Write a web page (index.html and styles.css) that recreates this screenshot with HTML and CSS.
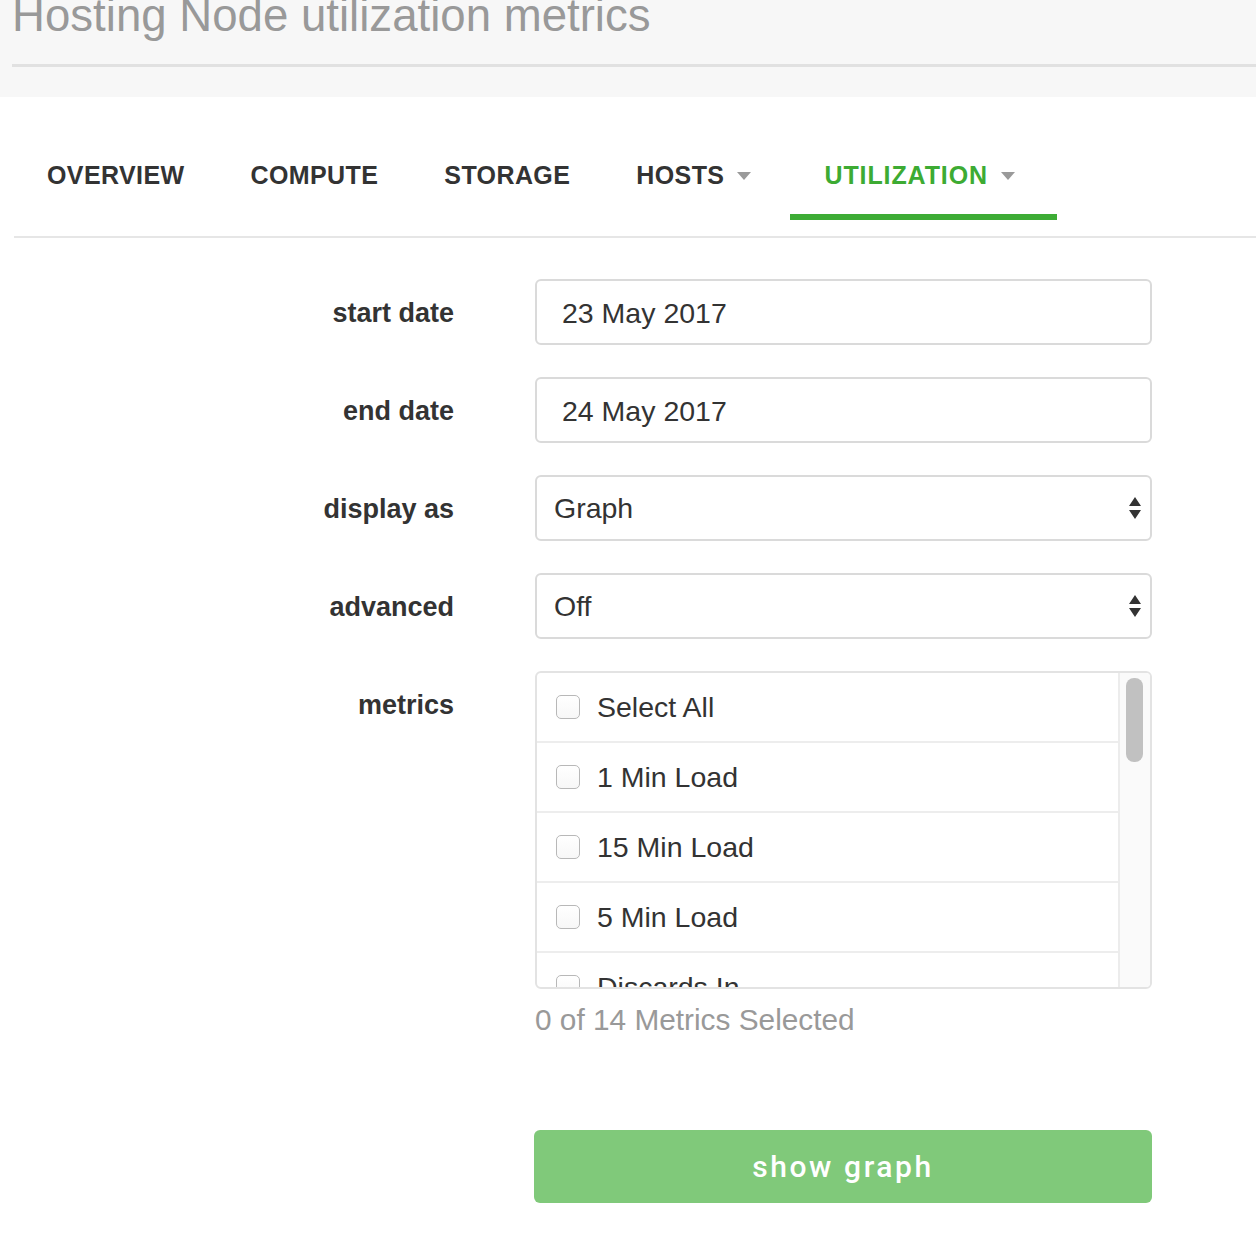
FILE: index.html
```html
<!DOCTYPE html>
<html>
<head>
<meta charset="utf-8">
<link rel="stylesheet" href="styles.css">
</head>
<body>
<header class="page-header">
  <h1 class="title">Hosting Node utilization metrics</h1>
  <div class="title-rule"></div>
</header>
<nav>
  <ul class="tabs">
    <li class="tab">OVERVIEW</li>
    <li class="tab">COMPUTE</li>
    <li class="tab">STORAGE</li>
    <li class="tab tab-drop">HOSTS<span class="caret"></span></li>
    <li class="tab tab-drop active">UTILIZATION<span class="caret"></span></li>
  </ul>
</nav>
<form class="form">
  <label class="label">start date</label>
  <div class="field"><input class="input" type="text" value="23 May 2017"></div>

  <label class="label">end date</label>
  <div class="field"><input class="input" type="text" value="24 May 2017"></div>

  <label class="label">display as</label>
  <div class="field"><div class="select"><span>Graph</span>
    <svg class="arrows" width="12" height="24" viewBox="0 0 12 24"><path d="M6 1 L12 10 L0 10 Z M0 14 L12 14 L6 23 Z" fill="#333"/></svg></div></div>

  <label class="label">advanced</label>
  <div class="field"><div class="select"><span>Off</span>
    <svg class="arrows" width="12" height="24" viewBox="0 0 12 24"><path d="M6 1 L12 10 L0 10 Z M0 14 L12 14 L6 23 Z" fill="#333"/></svg></div></div>

  <label class="label label-top">metrics</label>
  <div class="field">
    <div class="metrics">
      <div class="metric-list">
        <div class="metric"><span class="box"></span>Select All</div>
        <div class="metric"><span class="box"></span>1 Min Load</div>
        <div class="metric"><span class="box"></span>15 Min Load</div>
        <div class="metric"><span class="box"></span>5 Min Load</div>
        <div class="metric"><span class="box"></span>Discards In</div>
      </div>
      <div class="scrollbar"><div class="thumb"></div></div>
    </div>
    <div class="hint">0 of 14 Metrics Selected</div>
    <button class="btn" type="button">show graph</button>
  </div>
</form>
</body>
</html>
```

FILE: styles.css
```css
* { box-sizing: border-box; }
html, body { margin: 0; padding: 0; background: #fff; }
body {
  font-family: "Liberation Sans", Arial, sans-serif;
  color: #333;
  overflow: hidden;
}
.page-header {
  background: #f7f7f7;
  height: 97px;
  padding: 0;
  overflow: hidden;
}
.title {
  margin: -7px 0 0 12px;
  font-size: 45.6px;
  line-height: 46px;
  font-weight: normal;
  color: #999;
  white-space: nowrap;
}
.title-rule {
  margin: 25px 0 0 12px;
  height: 3px;
  background: #e1e1e1;
}
.tabs {
  list-style: none;
  margin: 39px 0 0 14px;
  padding: 0 0 16px 0;
  display: flex;
  border-bottom: 2px solid #e6e6e6;
}
.tab {
  height: 84px;
  padding: 0 33px;
  display: flex;
  align-items: center;
  font-size: 25px;
  line-height: 1;
  font-weight: bold;
  letter-spacing: 0.4px;
  color: #333;
  border-bottom: 6px solid transparent;
}
.tab-drop { padding-right: 39px; }
.tab.active {
  padding-left: 34px;
  padding-right: 42px;
  letter-spacing: 0.9px;
  color: #3dab33;
  border-bottom-color: #3dac35;
}
.caret {
  display: inline-block;
  width: 0;
  height: 0;
  margin-left: 13px;
  margin-top: 2px;
  border-left: 7.5px solid transparent;
  border-right: 7.5px solid transparent;
  border-top: 8px solid #9a9a9a;
}
.form {
  display: grid;
  grid-template-columns: 441px 617px;
  column-gap: 81px;
  row-gap: 32px;
  margin: 41px 0 0 13px;
}
.label {
  height: 66px;
  display: flex;
  align-items: center;
  justify-content: flex-end;
  padding-top: 2px;
  font-size: 27px;
  font-weight: bold;
  color: #333;
}
.label-top { align-self: start; }
.input {
  display: block;
  width: 100%;
  height: 66px;
  border: 2px solid #dadada;
  border-radius: 6px;
  padding: 3px 0 0 25px;
  font-family: "Liberation Sans", Arial, sans-serif;
  font-size: 28.5px;
  color: #333;
  background: #fff;
  outline: none;
}
.select {
  height: 66px;
  border: 2px solid #dadada;
  border-radius: 6px;
  padding: 0 9px 0 17px;
  display: flex;
  align-items: center;
  justify-content: space-between;
  font-size: 28.5px;
  color: #333;
  background: #fff;
}
.arrows { display: block; }
.metrics {
  height: 318px;
  border: 2px solid #e3e3e3;
  border-radius: 6px;
  overflow: hidden;
  display: flex;
  background: #fff;
}
.metric-list {
  flex: 1;
  overflow: hidden;
}
.scrollbar {
  width: 32px;
  flex: none;
  background: #fafafa;
  border-left: 2px solid #ececec;
  padding: 5px 7px 0 6px;
}
.thumb {
  height: 84px;
  border-radius: 8px;
  background: #c1c1c1;
}
.metric {
  height: 70px;
  border-bottom: 2px solid #ededed;
  display: flex;
  align-items: center;
  padding-left: 19px;
  font-size: 28.5px;
  color: #333;
}
.box {
  width: 24px;
  height: 24px;
  border: 1.5px solid #b8b8b8;
  border-radius: 5px;
  background: linear-gradient(#fff, #f7f7f7);
  margin-right: 17px;
  flex: none;
}
.hint {
  margin-top: 14px;
  font-size: 29.8px;
  line-height: 34px;
  color: #999;
}
.btn {
  display: block;
  margin-top: 93px;
  width: 618px;
  margin-left: -1px;
  height: 73px;
  border: none;
  border-radius: 6px;
  background: #80c97a;
  color: #fff;
  font-family: Roboto, "Liberation Sans", sans-serif;
  font-weight: 500;
  font-size: 30px;
  letter-spacing: 2.6px;
  padding-bottom: 2px;
}
```
